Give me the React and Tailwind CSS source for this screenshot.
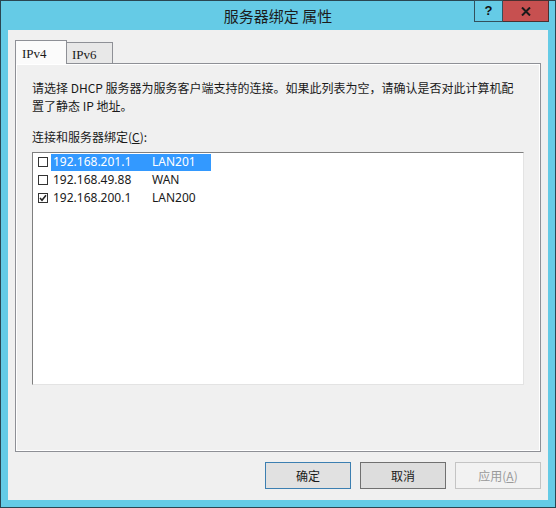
import React from "react";

const ui = { fontFamily: '"Noto Sans", "Noto Sans CJK SC", sans-serif' };
const cjk = { fontFamily: '"Noto Sans CJK SC", "Noto Sans", sans-serif' };
const serif = { fontFamily: '"Liberation Serif", "Noto Sans CJK SC", serif' };

function Check({ checked }) {
  return (
    <span className="w-[10px] h-[10px] border border-[#333333] bg-white flex items-center justify-center shrink-0">
      {checked && (
        <svg width="8" height="8" viewBox="0 0 8 8">
          <path d="M1 4 L3 6.2 L7 1.2" fill="none" stroke="#222" strokeWidth="1.6" />
        </svg>
      )}
    </span>
  );
}

function Row({ ip, name, checked, selected }) {
  return (
    <div className="h-[18px] flex items-center pl-[5px]">
      <Check checked={checked} />
      <div
        className={
          "ml-[3px] w-[160px] h-[17px] flex items-center pl-[2px] " +
          (selected ? "bg-[#3399ff] text-white" : "text-[#1a1a1a]")
        }
      >
        <span className="w-[99px]">{ip}</span>
        <span>{name}</span>
      </div>
    </div>
  );
}

export default function App() {
  return (
    <div className="w-[556px] h-[508px] bg-[#65cbe6] border border-[#2a4652] flex flex-col text-[12px]" style={ui}>
      {/* title bar */}
      <div className="h-[29px] relative flex items-center justify-center">
        <span className="text-[15px] text-[#1c1c1c] mt-[2px]" style={cjk}>
          服务器绑定 属性
        </span>
        <div className="absolute top-[-1px] right-[6px] flex">
          <div className="w-[29px] h-[22px] border border-[#33505c] flex items-center justify-center text-[13px] font-bold text-[#111]" style={{ fontFamily: '"Liberation Sans", sans-serif' }}>
            ?
          </div>
          <div className="w-[46px] h-[22px] border border-l-0 border-[#4a3030] bg-[#c75050] flex items-center justify-center">
            <svg width="10" height="9" viewBox="0 0 10 9">
              <path d="M1 0.5 L9 8.5 M9 0.5 L1 8.5" stroke="#1a1a1a" strokeWidth="2" />
            </svg>
          </div>
        </div>
      </div>

      {/* client */}
      <div className="mx-[7px] h-[470px] bg-[#f0f0f0] flex flex-col">
        {/* tabs */}
        <div className="mt-[10px] ml-[7px] h-[23px] flex items-start">
          <div className="relative z-10 w-[52px] h-[24px] bg-[#fbfbfb] border border-b-0 border-[#8e9096] pl-[6px] pt-[3px] text-[13px] text-[#1a1a1a]" style={serif}>
            IPv4
          </div>
          <div className="mt-[2px] w-[46px] h-[21px] bg-[#e8e8e8] border-t border-r border-[#8e9096] pl-[5px] pt-[2px] text-[13px] text-[#1a1a1a]" style={serif}>
            IPv6
          </div>
        </div>

        {/* panel */}
        <div className="ml-[7px] w-[526px] h-[389px] border border-[#8e9096]">
          <div className="w-full h-full border border-white flex flex-col pl-[15px] pt-[14px] text-[#1a1a1a]" style={cjk}>
            <div className="leading-[18px]">请选择 DHCP 服务器为服务客户端支持的连接。如果此列表为空，请确认是否对此计算机配</div>
            <div className="leading-[18px]">置了静态 IP 地址。</div>
            <div className="leading-[18px] mt-[13px]">
              连接和服务器绑定(<span className="underline">C</span>):
            </div>
            <div className="mt-[6px] w-[492px] h-[233px] bg-white border-t border-l border-[#7f7f7f] border-r border-b border-r-[#e3e3e3] border-b-[#e3e3e3]" style={ui}>
              <Row ip="192.168.201.1" name="LAN201" selected />
              <Row ip="192.168.49.88" name="WAN" />
              <Row ip="192.168.200.1" name="LAN200" checked />
            </div>
          </div>
        </div>

        {/* buttons */}
        <div className="mt-[10px] flex justify-end gap-[9px] pr-[7px]" style={cjk}>
          <button className="w-[86px] h-[27px] border border-[#3c7fb1] bg-[#e1e1e1] text-[#1a1a1a]">确定</button>
          <button className="w-[86px] h-[27px] border border-[#707070] bg-[#dddddd] text-[#1a1a1a]">取消</button>
          <button className="w-[86px] h-[27px] border border-[#c4c4c4] bg-[#f2f2f2] text-[#9a9a9a]">
            应用(<span className="underline">A</span>)
          </button>
        </div>
      </div>
    </div>
  );
}
